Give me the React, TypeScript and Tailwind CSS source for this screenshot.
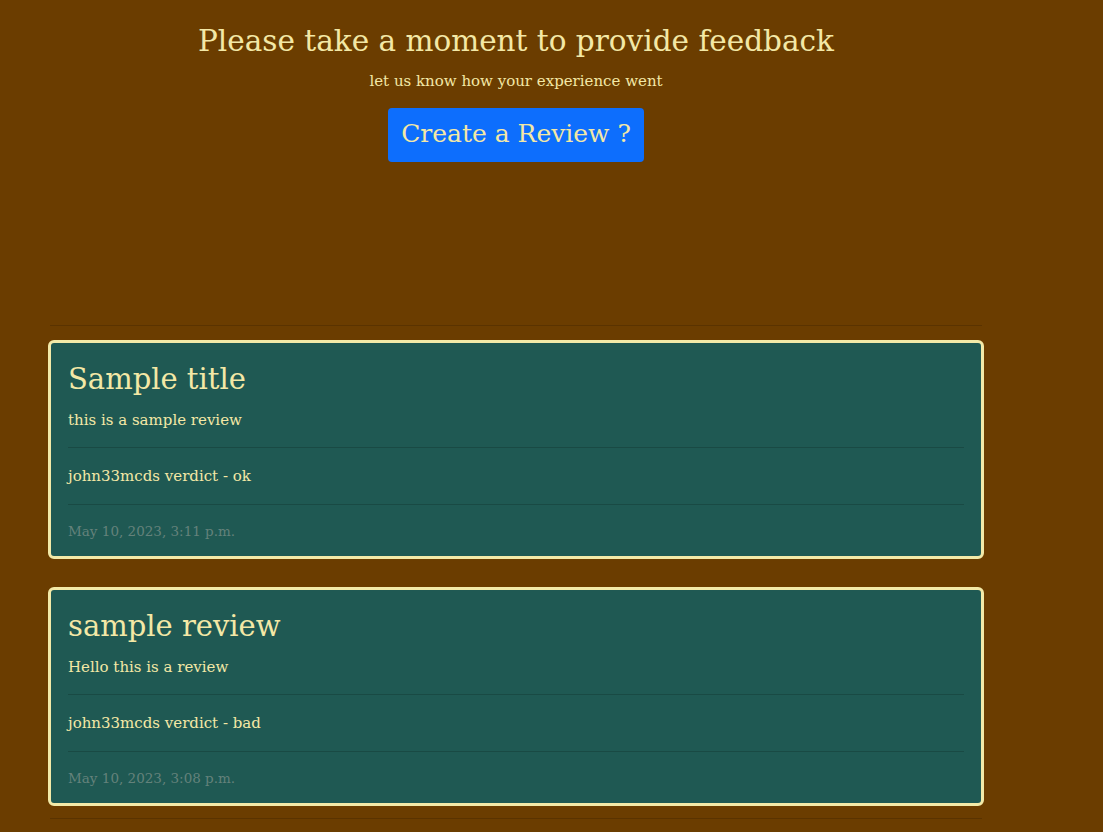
const reviews = [
  {
    title: "Sample title",
    body: "this is a sample review",
    verdict: "john33mcds verdict - ok",
    date: "May 10, 2023, 3:11 p.m.",
  },
  {
    title: "sample review",
    body: "Hello this is a review",
    verdict: "john33mcds verdict - bad",
    date: "May 10, 2023, 3:08 p.m.",
  },
];

function ReviewCard({ review }: { review: (typeof reviews)[number] }) {
  return (
    <div className="bg-[#1f5953] border-[3px] border-[#f3eaa8] rounded-[6px] px-[17px] pt-[16px] pb-[13px] text-[#f3e8a6]">
      <h2 className="text-[29px] leading-[40px]">{review.title}</h2>
      <p className="text-[15px] leading-[24px] mt-[9px]">{review.body}</p>
      <hr className="border-t border-[#194a44] mt-[15px]" />
      <p className="text-[15px] leading-[24px] py-[16px] font-medium">{review.verdict}</p>
      <hr className="border-t border-[#194a44]" />
      <p className="text-[13.5px] leading-[24px] pt-[14px] text-[#64827b]">{review.date}</p>
    </div>
  );
}

export default function App() {
  return (
    <div
      className="min-h-screen bg-[#6b3d00] text-[#f3e8a6]"
      style={{ fontFamily: '"DejaVu Serif", "Liberation Serif", serif' }}
    >
      <div className="w-[1032px]">
        <div className="flex flex-col items-center pt-[22px]">
          <h1 className="text-[29.5px] leading-[38px]">Please take a moment to provide feedback</h1>
          <p className="text-[15px] leading-[24px] mt-[9px]">let us know how your experience went</p>
          <button className="mt-[15px] bg-[#0d6efd] rounded-[4px] h-[54px] w-[256px] pb-[3px] text-[25px] text-[#f3e8a6]">
            Create a Review ?
          </button>
        </div>

        <div className="px-[48px] pt-[163px]">
          <hr className="border-t border-[#5a3300] mx-[2px]" />
          <div className="flex flex-col gap-[28px] mt-[14px]">
            {reviews.map((r) => (
              <ReviewCard key={r.date} review={r} />
            ))}
          </div>
          <hr className="border-t border-[#5a3300] mt-[12px] mx-[2px]" />
        </div>
      </div>
    </div>
  );
}
